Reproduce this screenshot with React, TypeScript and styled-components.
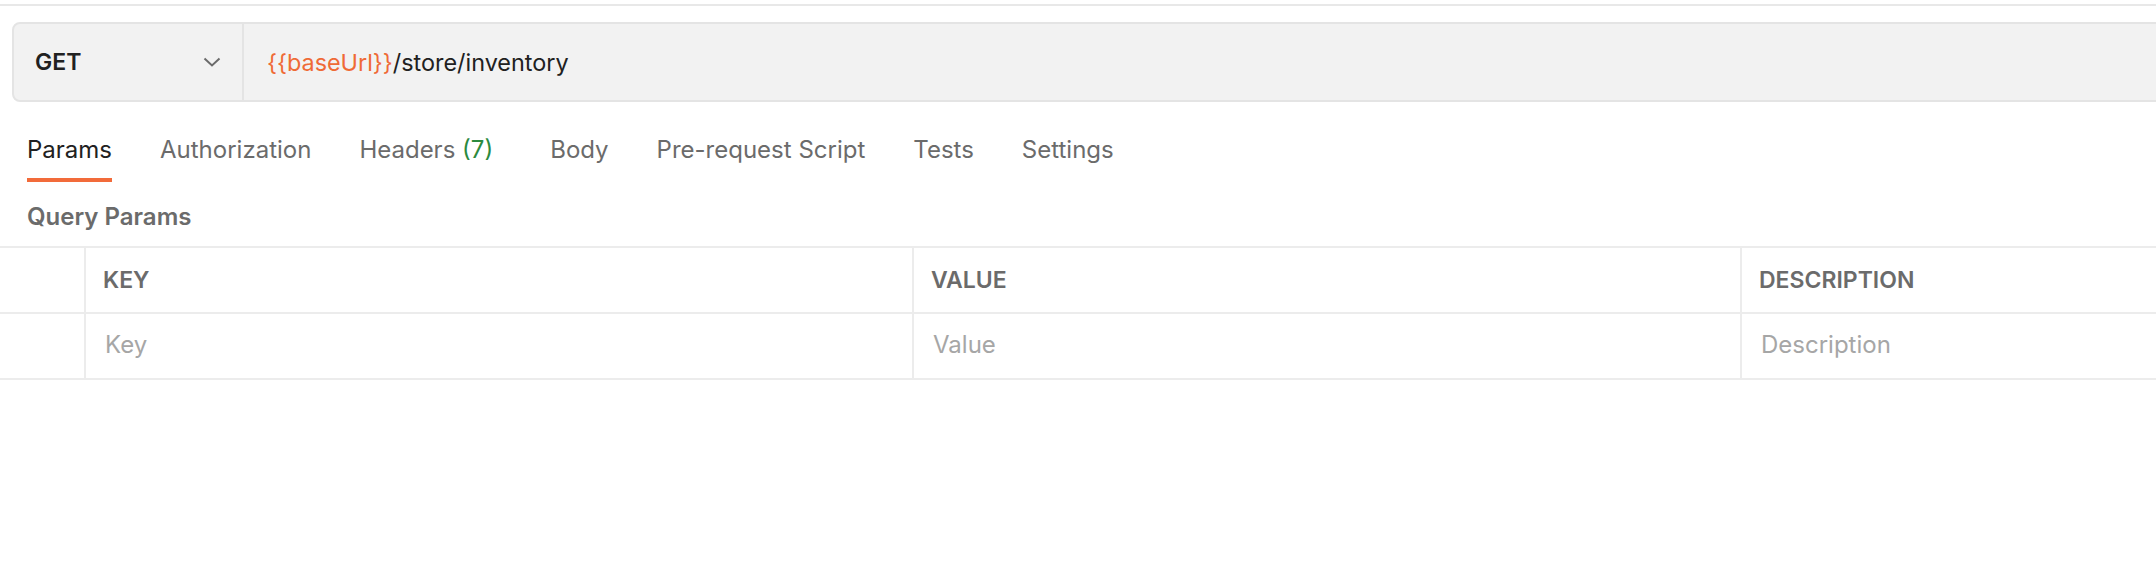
import styled, { createGlobalStyle } from "styled-components";

const GlobalStyle = createGlobalStyle`
  html, body {
    margin: 0;
    padding: 0;
    background: #ffffff;
  }
  body {
    font-family: Inter, "Noto Sans", "Liberation Sans", sans-serif;
    -webkit-font-smoothing: antialiased;
  }
`;

const tabs = [
  { label: "Params", active: true },
  { label: "Authorization" },
  { label: "Headers", count: 7 },
  { label: "Body" },
  { label: "Pre-request Script" },
  { label: "Tests" },
  { label: "Settings" },
];

const columns = ["KEY", "VALUE", "DESCRIPTION"];
const placeholders = ["Key", "Value", "Description"];

export default function App() {
  return (
    <Page>
      <GlobalStyle />
      <TopRule />
      <UrlRow>
        <UrlBar>
          <MethodSelect>
            <Method>GET</Method>
            <svg width="18" height="10" viewBox="0 0 18 10" fill="none">
              <polyline points="1.5,1.5 9,8.5 16.5,1.5" stroke="#6b6b6b" strokeWidth="2" />
            </svg>
          </MethodSelect>
          <UrlInput>
            <Variable>{"{{baseUrl}}"}</Variable>/store/inventory
          </UrlInput>
        </UrlBar>
      </UrlRow>

      <TabBar>
        {tabs.map((t) => (
          <Tab key={t.label} $active={t.active} $extra={t.count !== undefined}>
            {t.label}
            {t.count !== undefined && <Count> ({t.count})</Count>}
          </Tab>
        ))}
      </TabBar>

      <SectionTitle>Query Params</SectionTitle>

      <ParamsTable>
        <Row>
          <Cell $narrow />
          {columns.map((c) => (
            <HeadCell key={c}>{c}</HeadCell>
          ))}
        </Row>
        <Row>
          <Cell $narrow />
          {placeholders.map((p) => (
            <Cell key={p}>
              <Placeholder>{p}</Placeholder>
            </Cell>
          ))}
        </Row>
      </ParamsTable>
    </Page>
  );
}

const Page = styled.div`
  width: 100vw;
  height: 100vh;
  overflow: hidden;
  background: #fff;
`;

const TopRule = styled.div`
  height: 4px;
  border-bottom: 2px solid #e8e8e8;
`;

const UrlRow = styled.div`
  padding: 16px 0 0 12px;
`;

const UrlBar = styled.div`
  display: flex;
  height: 80px;
  box-sizing: border-box;
  margin-right: -12px;
  background: #f2f2f2;
  border: 2px solid #e4e4e4;
  border-radius: 8px 0 0 8px;
`;

const MethodSelect = styled.div`
  flex: 0 0 230px;
  box-sizing: border-box;
  display: flex;
  align-items: center;
  justify-content: space-between;
  padding: 0 21px 0 21px;
  border-right: 2px solid #e4e4e4;
`;

const Method = styled.span`
  font-size: 23px;
  font-weight: 600;
  color: #212121;
`;

const UrlInput = styled.div`
  display: flex;
  align-items: center;
  padding-left: 23px;
  font-size: 23.4px;
  color: #212121;
  white-space: pre;
`;

const Variable = styled.span`
  color: #ef6a36;
`;

const TabBar = styled.div`
  display: flex;
  gap: 48px;
  padding-left: 27px;
  margin-top: 32px;
`;

const Tab = styled.div<{ $active?: boolean; $extra?: boolean }>`
  font-size: 24px;
  line-height: 32px;
  padding-bottom: 12px;
  margin-right: ${(p) => (p.$extra ? "9px" : "0")};
  color: ${(p) => (p.$active ? "#212121" : "#6b6b6b")};
  border-bottom: 4px solid ${(p) => (p.$active ? "#f26b3a" : "transparent")};
  white-space: pre;
`;

const Count = styled.span`
  color: #2b8a3e;
`;

const SectionTitle = styled.div`
  margin: 19px 0 0 27px;
  font-size: 24px;
  line-height: 32px;
  font-weight: 600;
  color: #6b6b6b;
`;

const ParamsTable = styled.div`
  margin-top: 13px;
  border-top: 2px solid #ececec;
`;

const Row = styled.div`
  display: grid;
  grid-template-columns: 86px 828px 828px 1fr;
  height: 66px;
  box-sizing: border-box;
  border-bottom: 2px solid #ececec;
`;

const Cell = styled.div<{ $narrow?: boolean }>`
  display: flex;
  align-items: center;
  padding-left: ${(p) => (p.$narrow ? "0" : "17px")};
  border-right: 2px solid #ececec;
  &:last-child {
    border-right: none;
  }
`;

const HeadCell = styled(Cell)`
  font-size: 23px;
  font-weight: 600;
  color: #6b6b6b;
`;

const Placeholder = styled.span`
  padding: 0 0 3px 2px;
  font-size: 24px;
  color: #a6a6a6;
`;
